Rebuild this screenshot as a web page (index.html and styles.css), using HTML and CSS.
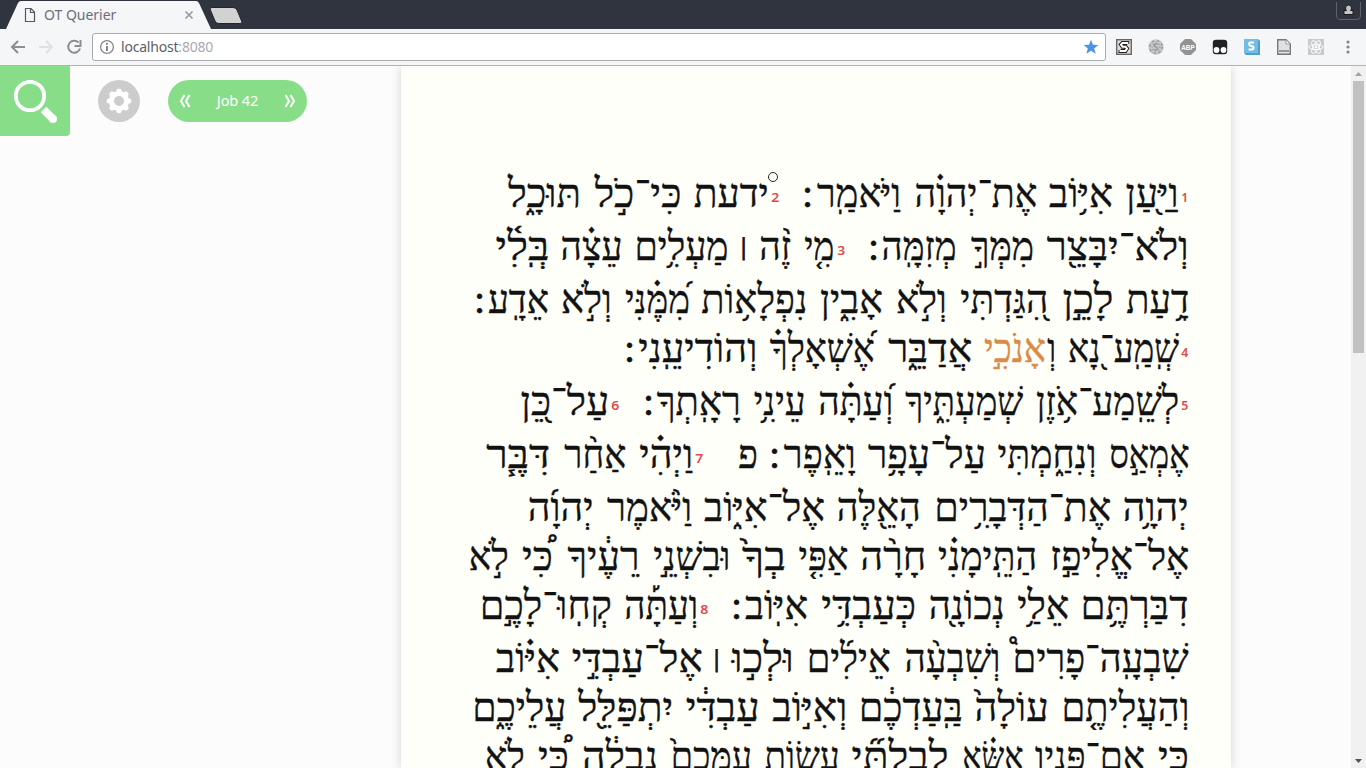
FILE: index.html
```html
<!DOCTYPE html>
<html lang="en">
<head>
<meta charset="utf-8">
<title>OT Querier</title>
<link rel="stylesheet" href="styles.css">
</head>
<body>
<header class="tabs">
  <svg class="tabs-art" width="260" height="29" viewBox="0 0 260 29">
    <path d="M6 29L18 3Q19 1 21 1H196Q198 1 199 3L211 29Z" fill="#f5f6f8"/>
    <path d="M212 7.500H233Q236 7.500 237 10L242 22Q242 23.500 240 23.500H219Q216 23.500 215 21L210 9Q210 7.500 212 7.500Z" fill="#d2d2d2" stroke="#22252d"/>
    <path d="M25.500 8.500H31L34.500 12V21.500H25.500ZM30.500 8.500V12.500H34.500" fill="none" stroke="#56585f" stroke-width="1.200"/>
    <path d="M185.500 11.500L192.500 18.500M192.500 11.500L185.500 18.500" stroke="#9a9ba3" stroke-width="1.700"/>
  </svg>
  <span class="tab-title">OT Querier</span>
  <svg class="profile" width="26" height="20" viewBox="0 0 26 20">
    <path d="M.5 2V15Q.5 19.500 4 19.500H21Q24.500 19.500 24.500 16V2" fill="none" stroke="#5f626b"/>
    <path d="M9.500 8a3 3 0 1 1 6 0Q15.500 9.500 14.500 10.500H17V14.500H8V10.500H10.500Q9.500 9.500 9.500 8Z" fill="#c4c4c6" stroke="#17191f"/>
  </svg>
</header>
<nav class="toolbar">
  <svg class="nav-icons" width="92" height="36" viewBox="0 0 92 36" fill="none" stroke-width="2">
    <path d="M25 18H12M18 12L12 18L18 24" stroke="#8c8d95"/>
    <path d="M39 18H52M46 12L52 18L46 24" stroke="#dfe0e3"/>
    <path d="M78.500 13.500A6 6 0 1 0 80 19.500M80.500 11V17H74.500" stroke="#8c8d95"/>
  </svg>
  <div class="address">
    <svg width="16" height="16" viewBox="0 0 16 16"><circle cx="8" cy="8" r="6.400" fill="none" stroke="#86878f" stroke-width="1.300"/><path d="M8 7V12M8 4V5.700" stroke="#77787f" stroke-width="1.800"/></svg>
    <span class="url">localhost<span class="port">:8080</span></span>
    <svg class="star" width="16" height="16" viewBox="0 0 16 16"><path d="M8 .7L10 5.700L15.300 6L11.200 9.400L12.600 14.800L8 11.800L3.400 14.800L4.800 9.400L.7 6L6 5.700Z" fill="#4f93e6"/></svg>
  </div>
  <div class="extensions">
    <svg width="16" height="16" viewBox="0 0 16 16"><rect x=".7" y=".7" width="14.600" height="14.600" fill="#e3ddd8" stroke="#666" stroke-width="1.400"/><path d="M11.300 5V4H6.500L5 5.500L6.500 7.700H9.500L11 9.500L9.500 12H4.500V11" fill="none" stroke="#222" stroke-width="4"/><path d="M11.300 5V4H6.500L5 5.500L6.500 7.700H9.500L11 9.500L9.500 12H4.500V11" fill="none" stroke="#fff" stroke-width="2"/></svg>
    <svg width="16" height="16" viewBox="0 0 16 16"><circle cx="8" cy="8" r="7.700" fill="#c6c6c6"/><g fill="none" stroke="#8f8f8f" stroke-width="1.200"><circle cx="8" cy="8" r="6.300" stroke-dasharray="2 3"/><circle cx="8" cy="8" r="4" stroke-dasharray="1 2"/><path d="M10 5H7Q5 7 8 8T8 11H6"/></g></svg>
    <svg width="16" height="16" viewBox="0 0 16 16"><path d="M5 0H11L16 5V11L11 16H5L0 11V5Z" fill="#929292"/><text x="8" y="10.700" text-anchor="middle" class="abp">ABP</text></svg>
    <svg width="16" height="16" viewBox="0 0 16 16"><rect x=".8" y=".8" width="14.400" height="14.400" rx="3" fill="#222"/><circle cx="4.500" cy="11" r="2.900" fill="#fff"/><circle cx="11.500" cy="11" r="2.900" fill="#fff"/></svg>
    <svg width="16" height="16" viewBox="0 0 16 16"><path d="M0 0H14L16 2V16H2L0 14Z" fill="#4f9fc6"/><path d="M0 0H14V14H0Z" fill="#72bde1"/><path d="M10 3.500H6Q4 5 6 6.500L9 7.500Q10.500 9 8.500 10.500H4.500" fill="none" stroke="#fff" stroke-width="2"/></svg>
    <svg width="16" height="16" viewBox="0 0 16 16"><path d="M1.700 .7H10L14.300 5V15.300H1.700Z" fill="#e1e1e1" stroke="#777" stroke-width="1.400"/><path d="M10 1V5H14" fill="#fff" stroke="#999"/><path d="M3 12H13" stroke="#999" stroke-width="2"/></svg>
    <svg width="16" height="16" viewBox="0 0 16 16"><path fill="#cacaca" d="M0 0H16V16H0Z"/><g fill="none" stroke="#fff" stroke-width=".9"><ellipse cx="8" cy="8" rx="7" ry="2.700"/><ellipse cx="8" cy="8" rx="7" ry="2.700" transform="rotate(60 8 8)"/><ellipse cx="8" cy="8" rx="7" ry="2.700" transform="rotate(120 8 8)"/></g><circle cx="8" cy="8" r="1.400" fill="#fff"/></svg>
    <svg width="16" height="16" viewBox="0 0 16 16" fill="#85868e"><circle cx="8" cy="3" r="1.600"/><circle cx="8" cy="8" r="1.600"/><circle cx="8" cy="13" r="1.600"/></svg>
  </div>
</nav>
<div class="viewport">
  <aside class="controls">
    <div class="search"><svg width="70" height="70" viewBox="0 0 70 70"><circle cx="30" cy="30" r="14.200" fill="none" stroke="#fff" stroke-width="3.800"/><path d="M43.500 43.500L53 53" stroke="#fff" stroke-width="8"/><circle cx="53" cy="53" r="4" fill="#fff"/></svg></div>
    <div class="settings"><svg width="26" height="26" viewBox="-13 -13 26 26"><circle r="7.600" fill="none" stroke="#fff" stroke-width="5"/><g fill="#fff"><rect x="-2.600" y="-12.300" width="5.200" height="24.600" rx="2"/><rect x="-2.600" y="-12.300" width="5.200" height="24.600" rx="2" transform="rotate(45)"/><rect x="-2.600" y="-12.300" width="5.200" height="24.600" rx="2" transform="rotate(90)"/><rect x="-2.600" y="-12.300" width="5.200" height="24.600" rx="2" transform="rotate(135)"/></g><circle r="5" fill="#ccc"/></svg></div>
    <div class="chapter">
      <svg width="12" height="14" viewBox="0 0 12 14"><path d="M5.500 1L2 7L5.500 13M10.500 1L7 7L10.500 13" fill="none" stroke="#fff" stroke-width="2"/></svg>
      <span>Job 42</span>
      <svg width="12" height="14" viewBox="0 0 12 14"><path d="M1.500 1L5 7L1.500 13M6.500 1L10 7L6.500 13" fill="none" stroke="#fff" stroke-width="2"/></svg>
    </div>
  </aside>
  <main class="sheet" id="sheet" dir="rtl" lang="he"></main>
  <div class="scrollbar">
    <svg width="15" height="15" viewBox="0 0 15 15"><path d="M4 10L7.500 6L11 10Z" fill="#a3a3a3"/></svg>
    <div class="thumb"></div>
    <svg width="15" height="15" viewBox="0 0 15 15"><path d="M4 6L7.500 10L11 6Z" fill="#505050"/></svg>
  </div>
</div>
<script src="script.js"></script>
</body>
</html>
```
FILE: styles.css
```css
* { box-sizing: border-box; }
body { margin: 0; height: 768px; overflow: hidden; display: flex; flex-direction: column; background: #fcfcfc; font-family: "Noto Sans", sans-serif; }
svg { display: block; flex: none; }
.tabs { height: 29px; background: #2f343f; display: flex; flex: none; position: relative; }
.tabs-art { flex: none; }
.tab-title { position: absolute; left: 44px; top: 6px; font-size: 14px; line-height: 18px; color: #6b6e78; letter-spacing: -.02px; }
.profile { margin-left: auto; margin-right: 4px; }
.toolbar { height: 37px; flex: none; display: flex; align-items: center; background: #f5f6f8; border-bottom: 1px solid #b3b3b6; }
.address { width: 1014px; height: 28px; border: 1px solid #a9aaad; border-radius: 3px; background: #fff; display: flex; align-items: center; padding: 0 6px; }
.url { margin-left: 6px; font-size: 14px; line-height: 18px; color: #5c5e68; letter-spacing: -.2px; }
.port { color: #a9aab0; }
.star { margin-left: auto; }
.extensions { display: flex; gap: 16px; margin-left: 10px; }
.abp { font: bold 6.5px "Liberation Sans", sans-serif; fill: #fff; }
.viewport { flex: 1; min-height: 0; display: flex; }
.controls { width: 401px; display: flex; align-items: flex-start; flex: none; }
.search { width: 70px; height: 70px; background: #88de88; border-bottom-right-radius: 4px; }
.settings { width: 42px; height: 42px; margin: 14px 28px 0; border-radius: 50%; background: #ccc; display: flex; align-items: center; justify-content: center; }
.chapter { width: 139px; height: 42px; margin-top: 14px; padding: 0 11px; border-radius: 21px; background: #88de88; color: #fff; display: flex; align-items: center; justify-content: space-between; font-size: 14.500px; letter-spacing: -.1px; }
.chapter span { padding-bottom: 2px; }
.sheet { width: 830px; flex: none; background: #fffffa; box-shadow: 0 0 10px rgba(0,0,0,.16); padding: 101px 42px 0; overflow: hidden; clip-path: inset(0 -12px); }
.line { display: flex; align-items: baseline; white-space: nowrap; color: #111; font: 40px/54px "Liberation Serif", serif; height: 53px; -webkit-text-stroke: .4px currentColor; }
.line.short { height: 49px; line-height: 46px; }
.word { flex: none; display: block; position: relative; }
.word span { display: inline-block; transform-origin: 100% 50%; }
.word.verse { font: 600 12.500px/20px "Noto Sans", sans-serif; color: #de4a4a; -webkit-text-stroke: 0; padding-bottom: 8px; top: -5px; }
.word.match { color: #d98b48; }
.word.stop { -webkit-text-stroke: .8px currentColor; }
.word.stop span { width: 10px; text-align: left; }
.word.bar { font-size: 19px; line-height: 20px; top: -4px; right: -3px; -webkit-text-stroke: .9px currentColor; }
.word.circle::before { content: ""; position: absolute; right: -9px; top: 5px; width: 8px; height: 8px; border: 1px solid #222; border-radius: 50%; }
.scrollbar { margin-left: auto; width: 15px; background: #f1f1f1; display: flex; flex-direction: column; }
.thumb { width: 11px; height: 272px; margin: 0 2px auto; background: #c1c1c1; }
```
FILE: script.js
```js
// Each word: text, right edge, left edge, optional class.
const lines = [
  [["1",1188,1181,"verse"],["וַיַּ֖עַן",1179,1126],["אִיּ֥וֹב",1113,1049],["אֶת־יְהוָ֗ה",1037,914],["וַיֹּאמַֽר",901,817],["׃",812,802,"stop"],["2",779,771,"verse"],["ידעת",769,694,"circle"],["כִּי־כֹ֣ל",682,595],["תּוּכָ֑ל",581,508]],
  [["וְלֹא־יִבָּצֵ֖ר",1189,1047],["מִמְּךָ֣",1034,971],["מְזִמָּֽה",957,882],["׃",878,868,"stop"],["3",845,837,"verse"],["מִ֤י",834,804],["זֶ֨ה",791,759],["׀",746,741,"bar"],["מַעְלִ֥ים",729,635],["עֵצָ֗ה",623,561],["בְּֽלִ֫י",549,495]],
  [["דָ֥עַת",1189,1126],["לָכֵ֣ן",1113,1062],["הִ֭גַּדְתִּי",1048,960],["וְלֹ֣א",947,896],["אָבִ֑ין",883,820],["נִפְלָא֥וֹת",807,701],["מִ֝מֶּ֗נִּי",690,625],["וְלֹ֣א",612,561],["אֵדָֽע",549,488],["׃",484,474,"stop"]],
  [["4",1188,1181,"verse"],["שְֽׁמַֽע־נָ֭א",1179,1068],["וְ",1056,1047],["אָנֹכִ֣י",1046,984,"match"],["אֲדַבֵּ֑ר",972,888],["אֶ֝שְׁאָלְךָ֗",875,770],["וְהוֹדִיעֵֽנִי",757,638],["׃",634,624,"stop"]],
  [["5",1188,1181,"verse"],["לְשֵֽׁמַע־אֹ֥זֶן",1179,1036],["שְׁמַעְתִּ֑יךָ",1023,905],["וְ֝עַתָּ֗ה",893,818],["עֵינִ֥י",806,754],["רָאָֽתְךָ",741,657],["׃",653,643,"stop"],["6",619,611,"verse"],["עַל־כֵּ֭ן",609,520]],
  [["אֶמְאַ֣ס",1189,1109],["וְנִחַ֑מְתִּי",1097,998],["עַל־עָפָ֥ר",986,868],["וָאֵֽפֶר",856,784],["׃",779,769,"stop"],["פ",758,738],["7",703,695,"verse"],["וַיְהִ֗י",693,639],["אַחַ֨ר",626,564],["דִּבֶּ֧ר",550,486]],
  [["יְהוָ֥ה",1189,1123],["אֶת־הַדְּבָרִ֥ים",1111,934],["הָאֵ֖לֶּה",921,837],["אֶל־אִיּ֑וֹב",825,704],["וַיֹּ֨אמֶר",692,607],["יְהוָ֜ה",594,528]],
  [["אֶל־אֱלִיפַ֣ז",1189,1050],["הַתֵּֽימָנִ֗י",1037,938],["חָרָ֨ה",926,860],["אַפִּ֤י",848,798],["בְךָ֙",786,742],["וּבִשְׁנֵ֣י",730,653],["רֵעֶ֔יךָ",639,567],["כִּ֠י",553,522],["לֹ֣א",509,469]],
  [["דִבַּרְתֶּ֥ם",1189,1081],["אֵלַ֥י",1069,1017],["נְכוֹנָ֖ה",1005,929],["כְּעַבְדִּ֥י",916,821],["אִיּֽוֹב",808,745],["׃",741,731,"stop"],["8",708,700,"verse"],["וְעַתָּ֡ה",698,624],["קְחֽוּ־לָכֶ֣ם",612,480]],
  [["שִׁבְעָֽה־פָרִים֩",1189,1013],["וְשִׁבְעָ֨ה",1000,904],["אֵילִ֜ים",891,807],["וּלְכ֣וּ",794,732],["׀",719,714,"bar"],["אֶל־עַבְדִּ֣י",703,572],["אִיּ֗וֹב",560,496]],
  [["וְהַעֲלִיתֶ֤ם",1189,1061],["עוֹלָה֙",1049,975],["בַּֽעַדְכֶ֔ם",963,859],["וְאִיּ֣וֹב",847,772],["עַבְדִּ֔י",760,686],["יִתְפַּלֵּ֖ל",673,578],["עֲלֵיכֶ֑ם",566,472]],
  [["כִּ֧י",1189,1158],["אִם־פָּנָ֣יו",1145,1035],["אֶשָּׂ֗א",1023,962],["לְבִלְתִּ֞י",949,852],["עֲשׂ֤וֹת",840,765],["עִמָּכֶם֙",752,671],["נְבָלָ֔ה",658,582],["כִּ֠י",569,538],["לֹ֣א",525,485]]
];
const shortLines = new Set([3, 7, 8, 10, 11]);
const sheet = document.getElementById("sheet");
lines.forEach((words, i) => {
  const line = document.createElement("div");
  line.className = shortLines.has(i) ? "line short" : "line";
  let edge = 1189;
  sheet.append(line);
  for (const [text, right, left, kind] of words) {
    const word = document.createElement("div");
    word.className = "word" + (kind ? " " + kind : "");
    word.style.width = right - left + "px";
    word.style.marginRight = edge - right + "px";
    const glyphs = document.createElement("span");
    glyphs.textContent = text;
    word.append(glyphs);
    line.append(word);
    // Fit the word to its measure; punctuation keeps its own width.
    if (kind !== "stop" && kind !== "bar") {
      glyphs.style.transform = `scaleX(${(right - left) / glyphs.getBoundingClientRect().width})`;
    }
    edge = left;
  }
});
```
